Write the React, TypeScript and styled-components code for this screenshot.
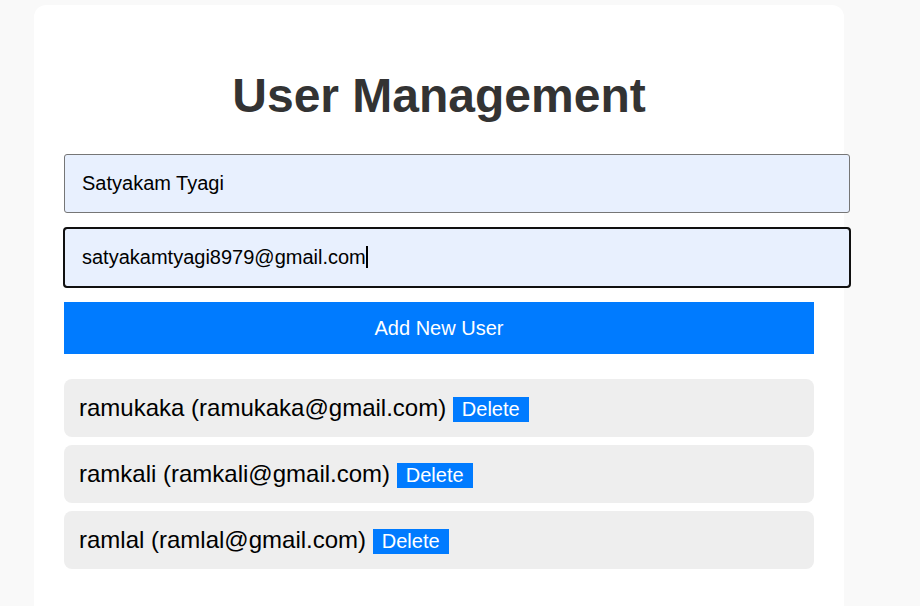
import React, { useState } from 'react';
import styled, { createGlobalStyle } from 'styled-components';

const GlobalStyle = createGlobalStyle`
    body {
        margin: 0;
        background: #f9f9f9;
        font-family: "Liberation Sans", Arial, sans-serif;
    }
`;

type User = { name: string; email: string };

const initialUsers: User[] = [
    { name: 'ramukaka', email: 'ramukaka@gmail.com' },
    { name: 'ramkali', email: 'ramkali@gmail.com' },
    { name: 'ramlal', email: 'ramlal@gmail.com' },
];

const App: React.FC = () => {
    const [users, setUsers] = useState<User[]>(initialUsers);
    const [name, setName] = useState('Satyakam Tyagi');
    const [email, setEmail] = useState('satyakamtyagi8979@gmail.com');

    const handleAdd = () => {
        if (name.trim() === '' || email.trim() === '') return;
        setUsers([...users, { name, email }]);
        setName('');
        setEmail('');
    };

    const handleDelete = (index: number) => {
        setUsers(users.filter((_, i) => i !== index));
    };

    return (
        <>
            <GlobalStyle />
            <Page>
                <Card>
                    <Title>User Management</Title>
                    <Input
                        type="text"
                        placeholder="Name"
                        value={name}
                        onChange={(e) => setName(e.target.value)}
                    />
                    <InputWrap>
                        <Input
                            type="email"
                            placeholder="Email"
                            value={email}
                            $focused
                            onChange={(e) => setEmail(e.target.value)}
                        />
                        {/* text caret drawn over the focused field */}
                        <Caret />
                    </InputWrap>
                    <AddButton onClick={handleAdd}>Add New User</AddButton>
                    <UserList>
                        {users.map((user, index) => (
                            <UserItem key={index}>
                                {user.name} ({user.email}){' '}
                                <DeleteButton onClick={() => handleDelete(index)}>Delete</DeleteButton>
                            </UserItem>
                        ))}
                    </UserList>
                </Card>
            </Page>
        </>
    );
};

export default App;

const Page = styled.div`
    padding: 5px 0 0 34px;
`;

const Card = styled.div`
    width: 810px;
    box-sizing: border-box;
    min-height: 640px;
    padding: 30px;
    background: #fff;
    border-radius: 12px;
`;

const Title = styled.h1`
    margin: 33px 0 31px;
    font-size: 48px;
    font-weight: bold;
    color: #333;
    text-align: center;
`;

const InputWrap = styled.div`
    position: relative;
`;

const Input = styled.input<{ $focused?: boolean }>`
    display: block;
    width: 100%;
    margin: 0 0 15px;
    padding: 17px;
    font-size: 20px;
    font-family: "Liberation Sans", Arial, sans-serif;
    color: #000;
    background: #e8f0fe;
    border: 1px solid #767676;
    border-radius: 3px;
    outline: ${(p) => (p.$focused ? '2px solid #101010' : 'none')};
    outline-offset: -1px;
    caret-color: #000;
`;

const Caret = styled.span`
    position: absolute;
    left: 302px;
    top: 18px;
    width: 1.5px;
    height: 22px;
    background: #000;
    pointer-events: none;
`;

const AddButton = styled.button`
    display: block;
    width: 100%;
    height: 52px;
    margin: 0 0 25px;
    padding: 0;
    font-size: 20px;
    font-family: "Liberation Sans", Arial, sans-serif;
    color: #fff;
    background: #007bff;
    border: none;
    cursor: pointer;
`;

const UserList = styled.ul`
    list-style: none;
    margin: 0;
    padding: 0;
    display: flex;
    flex-direction: column;
    gap: 8px;
`;

const UserItem = styled.li`
    padding: 15px;
    font-size: 24px;
    color: #000;
    background: #eee;
    border-radius: 8px;
`;

const DeleteButton = styled.button`
    padding: 1px 9px;
    font-size: 20px;
    font-family: "Liberation Sans", Arial, sans-serif;
    color: #fff;
    background: #007bff;
    border: none;
    cursor: pointer;
`;
